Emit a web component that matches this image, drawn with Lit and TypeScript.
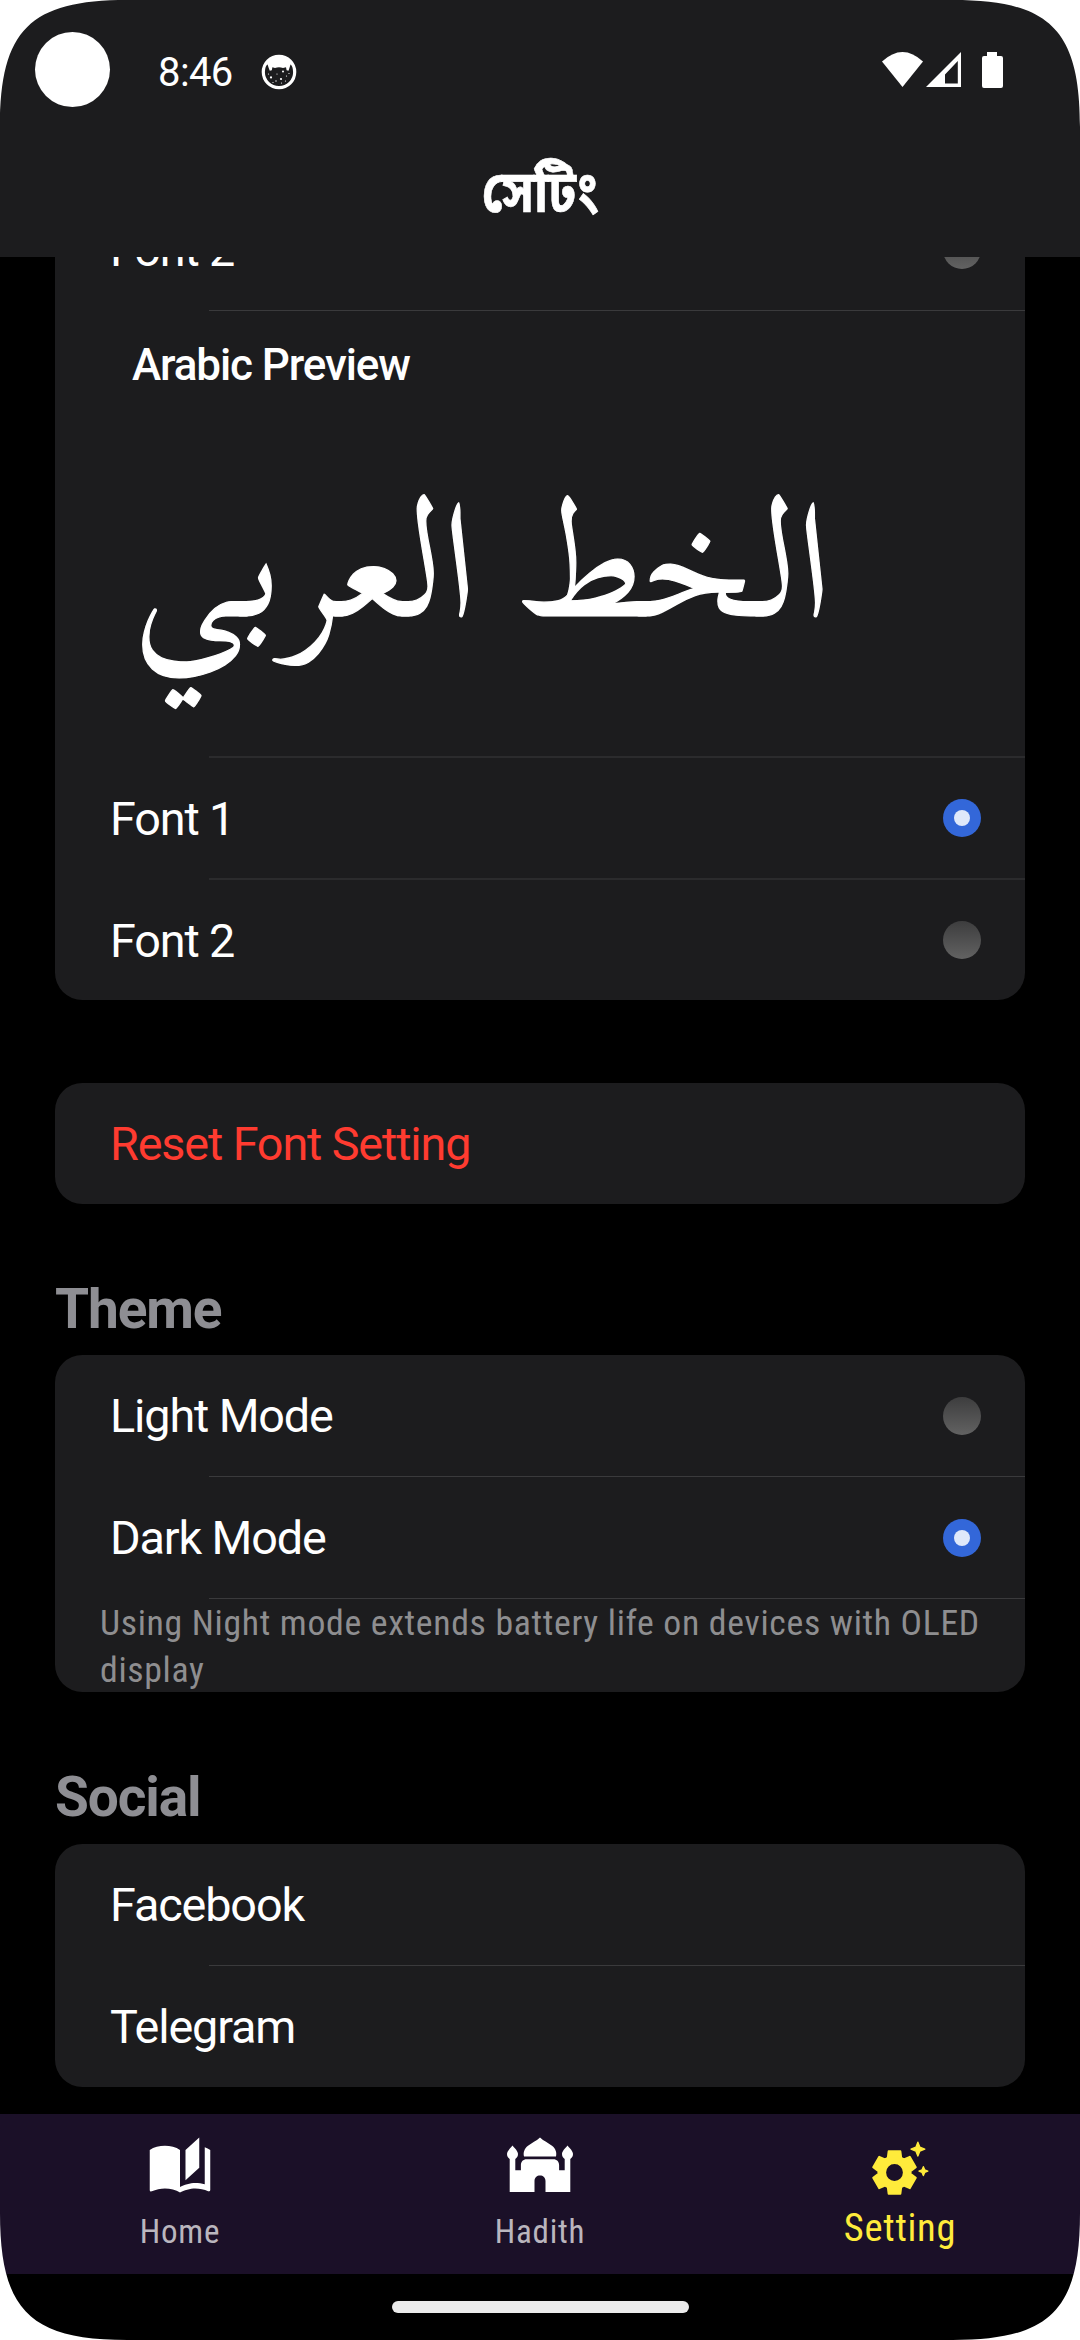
import { LitElement, html, css, svg } from "lit";
import { customElement, property } from "lit/decorators.js";
import { classMap } from "lit/directives/class-map.js";

@customElement("radio-dot")
class RadioDot extends LitElement {
  @property({ type: Boolean }) on = false;
  static styles = css`
    :host { display: block; }
    .dot { width: 38px; height: 38px; border-radius: 50%; background: linear-gradient(#3d3d3e, #626262); display: grid; place-items: center; }
    .dot.on { background: #3367d9; }
    .dot.on::after { content: ""; width: 16px; height: 16px; border-radius: 50%; background: #dfe8fa; }
  `;
  render() {
    return html`<div class=${classMap({ dot: true, on: this.on })}></div>`;
  }
}

@customElement("list-row")
class ListRow extends LitElement {
  @property() label = "";
  @property() radio = "";
  @property() tone = "";
  static styles = css`
    :host { display: block; height: 121px; }
    .row { height: 100%; display: flex; align-items: center; justify-content: space-between; padding: 0 44px 0 55px; box-sizing: border-box; }
    .label { padding-top: 2px; font-size: 46.75px; line-height: 1; letter-spacing: -1.13px; color: #fff; white-space: nowrap; }
    .danger { color: #ff3b30; }
  `;
  render() {
    return html`<div class="row">
      <span class=${classMap({ label: true, danger: this.tone === "danger" })}>${this.label}</span>
      ${this.radio ? html`<radio-dot ?on=${this.radio === "on"}></radio-dot>` : null}
    </div>`;
  }
}

const catIcon = svg`
  <circle cx="18" cy="18" r="15.7" fill="none" stroke="#fff" stroke-width="3.2"/>
  <path fill="#fff" d="M3 12Q8 1.5 18 1.5Q28 1.5 33 12L29.5 10.5Q28.5 14 27.5 16.8L25.6 16.2L25 13.2L22 14Q18 12.6 14 14L11.4 13.2L10.8 16.2L8.8 16.8Q7.6 14 6.6 10.5Z"/>
  <g fill="#fff"><circle cx="10" cy="23.4" r="1.1"/><circle cx="20" cy="25" r="1.1"/><circle cx="22" cy="17.5" r="1"/><circle cx="16" cy="20" r=".6"/><circle cx="25.5" cy="22" r=".6"/><circle cx="15" cy="27" r=".7"/><circle cx="7.5" cy="20" r=".6"/><circle cx="28" cy="19.5" r=".6"/><circle cx="20.5" cy="29" r=".6"/><circle cx="12" cy="28.5" r=".6"/><circle cx="24.5" cy="27" r=".6"/></g>`;

const bookIcon = svg`<path fill="#fff" transform="scale(2.75)" d="M19 2L14 6.5V17.5L19 13V2M6.5 5C4.55 5 2.45 5.4 1 6.5V21.16C1 21.41 1.25 21.66 1.5 21.66C1.6 21.66 1.65 21.59 1.75 21.59C3.1 20.94 5.05 20.5 6.5 20.5C8.45 20.5 10.55 20.9 12 22C13.35 21.15 15.8 20.5 17.5 20.5C19.15 20.5 20.85 20.81 22.25 21.56C22.35 21.61 22.4 21.59 22.5 21.59C22.75 21.59 23 21.34 23 21.09V6.5C22.4 6.05 21.75 5.75 21 5.5V19C19.9 18.65 18.7 18.5 17.5 18.5C15.8 18.5 13.35 19.15 12 20V6.5C10.55 5.4 8.45 5 6.5 5Z"/>`;

const mosqueIcon = svg`<g fill="#fff">
  <path d="M33 5.5C37 9.2 41 10.6 45 13.8C48.6 16.6 50 20.5 49 24.6H17C16 20.5 17.4 16.6 21 13.8C25 10.6 29 9.2 33 5.5Z"/>
  <path d="M5.5 13.5C8 16.6 11 19.2 11 22C11 24.4 9.8 26 8.3 26.9V38.3H13.9V33C13.9 29.5 16.2 27.2 19.6 27.2H46.4C49.8 27.2 52.1 29.5 52.1 33V38.3H57.7V26.9C56.2 26 55 24.4 55 22C55 19.2 58 16.6 60.5 13.5C63 16.6 66 19.2 66 22C66 24.4 64.8 26 63.3 26.9V60H38.5V49C38.5 45.5 36 43.5 33 43.5C30 43.5 27.5 45.5 27.5 49V60H2.7V26.9C1.2 26 0 24.4 0 22C0 19.2 3 16.6 5.5 13.5Z"/></g>`;

const gearIcon = svg`<g fill="#ffeb3b" transform="scale(2.75)" stroke="#ffeb3b" stroke-linejoin="round">
  <path stroke-width=".7" d="M15.85 14.5l1.9 1.4-2.2 3.8-2.15-.9c-.3.22-.62.4-.95.56L12.15 21.7h-4.3l-.3-2.34c-.33-.16-.65-.34-.95-.56l-2.15.9-2.2-3.8 1.9-1.4a6 6 0 0 1 0-1l-1.9-1.4 2.2-3.8 2.15.9c.3-.22.62-.4.95-.56L7.85 6.3h4.3l.3 2.34c.33.16.65.34.95.56l2.15-.9 2.2 3.8-1.9 1.4a6 6 0 0 1 0 1zM13.4 14a3.4 3.4 0 1 0-6.8 0 3.4 3.4 0 1 0 6.8 0z"/>
  <path stroke-width=".5" d="M18.5 3l.72 1.78L21 5.5l-1.78.72L18.5 8l-.72-1.78L16 5.5l1.78-.72zM20.5 11.9l.47 1.13 1.13.47-1.13.47-.47 1.13-.47-1.13-1.13-.47 1.13-.47z"/></g>`;

@customElement("app-root")
class AppRoot extends LitElement {
  static styles = css`
    :host { display: block; width: 1080px; height: 2340px; font-family: Roboto, "Liberation Sans", sans-serif; }
    svg { display: block; }
    .screen { position: relative; width: 1080px; height: 2340px; display: flex; flex-direction: column; background: #000; overflow: hidden; }
    .corners { position: absolute; inset: 0; z-index: 2; }
    .header { flex: none; height: 257px; background: #1c1c1e; display: flex; flex-direction: column; z-index: 1; }
    .status { height: 139px; display: flex; align-items: center; padding: 0 77px 0 35px; box-sizing: border-box; }
    .camera { width: 75px; height: 75px; border-radius: 50%; background: #fff; }
    .time { margin-left: 48px; padding-top: 6px; width: 78px; font-size: 40px; line-height: 1; color: #fff; letter-spacing: -.6px; }
    .cat { margin-left: 25px; padding-top: 4px; flex: 1; }
    .signals { padding-top: 2px; }
    .title { flex: 1; display: flex; align-items: center; justify-content: center; font: 700 55px/1 "Noto Sans Bengali", "Noto Sans Bengali UI", Roboto, sans-serif; color: #fff; }
    .title span { transform: translateY(-1px) scale(.91, 1.05); -webkit-text-stroke: .6px #fff; }
    .content { flex: 1; min-height: 0; display: flex; flex-direction: column; padding: 0 55px; }
    .card { flex: none; background: #1c1c1e; border-radius: 27.5px; }
    .scrolled { margin-top: -68px; }
    .reset { margin-top: 83px; }
    .sep { height: 1px; margin-left: 154px; background: #3a3a3c; }
    .soft { height: 2px; background: #2b2b2d; }
    .short { height: 120px; }
    .preview { height: 445px; display: flex; flex-direction: column; }
    .preview-title { padding: 32px 0 0 77px; font-size: 44px; line-height: 1; font-weight: 500; letter-spacing: -1.1px; color: #fff; }
    .sample { overflow: visible; }
    .arabic { font-family: "Scheherazade New", Scheherazade, "Noto Naskh Arabic", Amiri, "Liberation Serif", serif; font-feature-settings: "liga" 0, "dlig" 0, "calt" 0; stroke: #fff; stroke-width: 1.2px; }
    .section { flex: none; height: 151px; box-sizing: border-box; display: flex; align-items: flex-end; padding-bottom: 18px; font-size: 55px; line-height: 1; font-weight: 700; letter-spacing: -1.1px; color: #8e8e93; }
    .section.tall { height: 152px; padding-bottom: 19px; }
    .note { height: 93px; box-sizing: border-box; padding: 1px 0 0 45px; display: flex; flex-direction: column; font: 400 35.75px/47px "Roboto Condensed", Roboto, sans-serif; font-stretch: 75%; letter-spacing: .67px; color: #8e8e90; white-space: nowrap; }
    .nav { flex: none; height: 160px; display: grid; grid-template-columns: repeat(3, 1fr); background: #1b1028; font-family: "Roboto Condensed", Roboto, sans-serif; font-stretch: 75%; }
    .tab { display: flex; flex-direction: column; align-items: center; padding-top: 18px; color: #bab6be; font-size: 33px; line-height: 33px; letter-spacing: .8px; gap: 17px; }
    .tab.active { padding-top: 20px; color: #ffeb3b; font-size: 38.5px; line-height: 38.5px; letter-spacing: .75px; gap: 9px; }
    .home { flex: none; height: 66px; display: flex; justify-content: center; padding-top: 27px; box-sizing: border-box; }
    .pill { width: 297px; height: 12px; border-radius: 6px; background: #ebebeb; }
  `;
  render() {
    return html`<div class="screen">
      <div class="header">
        <div class="status">
          <div class="camera"></div>
          <div class="time">8:46</div>
          <div class="cat"><svg width="36" height="36">${catIcon}</svg></div>
          <svg class="signals" width="121" height="37" fill="#fff">
            <path d="M0 9.5Q20.5-9.5 41 9.5L20.5 35Z"/>
            <path fill-rule="evenodd" d="M44 35L79 0V35ZM63 22.5V31.5H75.8V9Z"/>
            <path d="M105 0h10v4h4q2 0 2 2v28q0 2-2 2h-17q-2 0-2-2V6q0-2 2-2h3z"/>
          </svg>
        </div>
        <div class="title"><span>সেটিং</span></div>
      </div>
      <div class="content">
        <div class="card scrolled">
          <list-row label="Font 2" radio="off"></list-row>
          <div class="sep"></div>
          <div class="preview">
            <div class="preview-title">Arabic Preview</div>
            <svg class="sample" width="970" height="340"><text class="arabic" x="78" y="229" fill="#fff" font-size="162" textLength="698" lengthAdjust="spacingAndGlyphs">الخط العربي</text></svg>
          </div>
          <div class="sep soft"></div>
          <list-row class="short" label="Font 1" radio="on"></list-row>
          <div class="sep soft"></div>
          <list-row class="short" label="Font 2" radio="off"></list-row>
        </div>
        <div class="card reset"><list-row label="Reset Font Setting" tone="danger"></list-row></div>
        <div class="section">Theme</div>
        <div class="card">
          <list-row label="Light Mode" radio="off"></list-row>
          <div class="sep"></div>
          <list-row label="Dark Mode" radio="on"></list-row>
          <div class="sep"></div>
          <div class="note"><span>Using Night mode extends battery life on devices with OLED</span><span>display</span></div>
        </div>
        <div class="section tall">Social</div>
        <div class="card">
          <list-row label="Facebook"></list-row>
          <div class="sep"></div>
          <list-row label="Telegram"></list-row>
        </div>
      </div>
      <div class="nav">
        <div class="tab"><svg width="66" height="66">${bookIcon}</svg><span>Home</span></div>
        <div class="tab"><svg width="66" height="66">${mosqueIcon}</svg><span>Hadith</span></div>
        <div class="tab active"><svg width="66" height="66">${gearIcon}</svg><span>Setting</span></div>
      </div>
      <div class="home"><div class="pill"></div></div>
      <svg class="corners" width="1080" height="2340" fill="#fff">
        <path d="M0 0H127C30 0 0 30 0 127ZM1080 0V127C1080 30 1050 0 953 0ZM0 2340V2213C0 2310 30 2340 127 2340ZM1080 2340H953C1050 2340 1080 2310 1080 2213Z"/>
      </svg>
    </div>`;
  }
}
